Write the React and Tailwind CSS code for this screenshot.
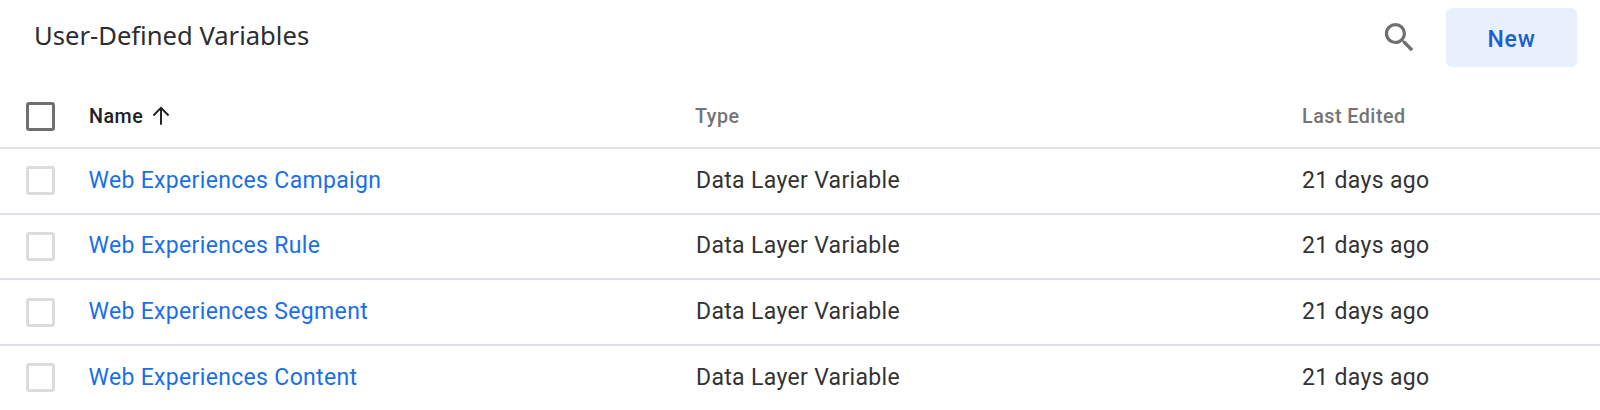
import React from 'react';

const rows = ['Web Experiences Campaign', 'Web Experiences Rule', 'Web Experiences Segment', 'Web Experiences Content'];

function Checkbox({ header }) {
  return (
    <span className={header
      ? 'block w-[29px] h-[29px] rounded-[3px] border-[3px] border-[#6f6f6f] bg-white'
      : 'block w-[29px] h-[29px] rounded-[3px] border-[3px] border-[#dcdcdc] bg-white'} />
  );
}

export default function App() {
  return (
    <div className="w-[1600px] h-[410px] overflow-hidden bg-white font-['Roboto',sans-serif]">
      <div className="h-[85px] flex items-start justify-between pl-[34px] pr-[23px] pt-2">
        <h1 className="mt-[9px] text-[25.6px] leading-[38px] text-[#2b2d30] font-['Noto_Sans',sans-serif]">User-Defined Variables</h1>
        <div className="flex items-center">
          <svg className="w-[39px] h-[39px] mr-[27px]" viewBox="0 0 24 24" fill="#6f6f6f">
            <path d="M15.5 14h-.79l-.28-.27A6.471 6.471 0 0 0 16 9.5 6.5 6.5 0 1 0 9.5 16c1.61 0 3.09-.59 4.23-1.57l.27.28v.79l5 4.99L20.49 19l-4.99-5zm-6 0C7.01 14 5 11.99 5 9.5S7.01 5 9.5 5 14 7.01 14 9.5 11.99 14 9.5 14z" />
          </svg>
          <button className="w-[131px] h-[59px] pt-[5px] rounded-[6px] bg-[#e8f0fc] text-[#1a5fd0] text-[23px] font-medium tracking-[0.7px]">New</button>
        </div>
      </div>
      <div className="h-[64px] pt-[1px] flex items-center border-b-2 border-[#e0e0e6]">
        <div className="w-[89px] pl-[26px]"><Checkbox header /></div>
        <div className="w-[606px] flex items-center text-[#202124] text-[19.7px] font-medium tracking-[0.5px]">
          Name
          <svg className="w-[26px] h-[26px] ml-[5px]" viewBox="0 0 24 24" fill="none" stroke="#202124" strokeWidth="1.8">
            <path d="M12 20V5M5 11.5l7-7 7 7" />
          </svg>
        </div>
        <div className="w-[607px] text-[#747474] text-[19.7px] font-medium tracking-[0.5px]">Type</div>
        <div className="text-[#747474] text-[19.7px] font-medium tracking-[0.5px]">Last Edited</div>
      </div>
      {rows.map((name) => (
        <div key={name} className="h-[65.67px] flex items-center border-b-2 border-[#e0e0e6] last:border-transparent text-[23px] tracking-[0.33px]">
          <div className="w-[88.5px] pl-[26px]"><Checkbox /></div>
          <a className="w-[607.5px] text-[#1a6fe8]">{name}</a>
          <div className="w-[606px] text-[#333333]">Data Layer Variable</div>
          <div className="text-[#333333]">21 days ago</div>
        </div>
      ))}
    </div>
  );
}
